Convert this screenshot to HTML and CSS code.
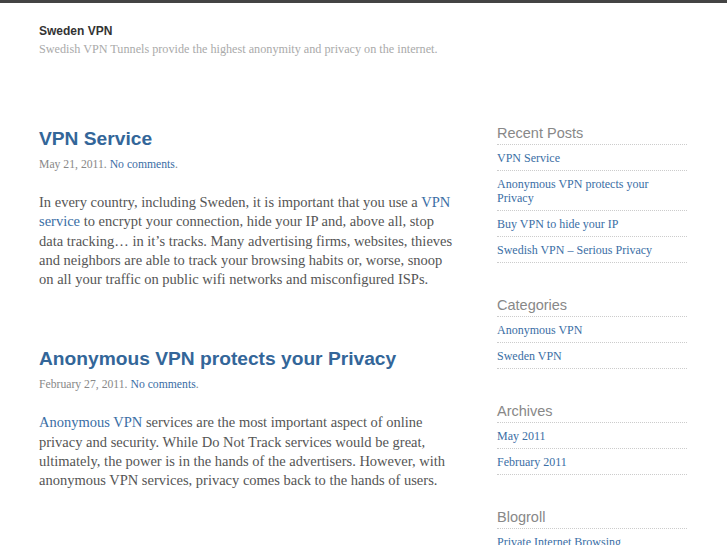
FILE: index.html
```html
<!DOCTYPE html>
<html>
<head>
<meta charset="utf-8">
<link rel="stylesheet" href="styles.css">
</head>
<body>
<div class="topbar"></div>
<div class="page">
  <header class="site-header">
    <div class="site-title">Sweden VPN</div>
    <div class="site-desc">Swedish VPN Tunnels provide the highest anonymity and privacy on the internet.</div>
  </header>
  <div class="layout">
    <main class="content">
      <article class="post">
        <h2 class="post-title">VPN Service</h2>
        <div class="post-meta">May 21, 2011. <a href="#">No comments</a>.</div>
        <p class="post-body">In every country, including Sweden, it is important that you use a <a href="#">VPN service</a> to encrypt your connection, hide your IP and, above all, stop data tracking… in it’s tracks. Many advertising firms, websites, thieves and neighbors are able to track your browsing habits or, worse, snoop on all your traffic on public wifi networks and misconfigured ISPs.</p>
      </article>
      <article class="post">
        <h2 class="post-title">Anonymous VPN protects your Privacy</h2>
        <div class="post-meta">February 27, 2011. <a href="#">No comments</a>.</div>
        <p class="post-body"><a href="#">Anonymous VPN</a> services are the most important aspect of online privacy and security. While Do Not Track services would be great, ultimately, the power is in the hands of the advertisers. However, with anonymous VPN services, privacy comes back to the hands of users.</p>
      </article>
    </main>
    <aside class="sidebar">
      <section class="widget">
        <h3 class="widget-title">Recent Posts</h3>
        <ul class="widget-list">
          <li><a href="#">VPN Service</a></li>
          <li><a href="#">Anonymous VPN protects your Privacy</a></li>
          <li><a href="#">Buy VPN to hide your IP</a></li>
          <li><a href="#">Swedish VPN – Serious Privacy</a></li>
        </ul>
      </section>
      <section class="widget">
        <h3 class="widget-title">Categories</h3>
        <ul class="widget-list">
          <li><a href="#">Anonymous VPN</a></li>
          <li><a href="#">Sweden VPN</a></li>
        </ul>
      </section>
      <section class="widget">
        <h3 class="widget-title">Archives</h3>
        <ul class="widget-list">
          <li><a href="#">May 2011</a></li>
          <li><a href="#">February 2011</a></li>
        </ul>
      </section>
      <section class="widget">
        <h3 class="widget-title">Blogroll</h3>
        <ul class="widget-list">
          <li><a href="#">Private Internet Browsing</a></li>
        </ul>
      </section>
    </aside>
  </div>
</div>
</body>
</html>
```
FILE: styles.css
```css
html, body {
  margin: 0;
  padding: 0;
  background: #ffffff;
}
body {
  font-family: "Liberation Serif", "Times New Roman", serif;
  color: #555555;
  overflow: hidden;
}
a {
  color: #3a6ea5;
  text-decoration: none;
}
.topbar {
  height: 3px;
  background: #444444;
}
.page {
  padding-left: 39px;
}
.site-header {
  padding-top: 21px;
  height: 103px;
}
.site-title {
  font-family: "Liberation Sans", Arial, sans-serif;
  font-weight: bold;
  font-size: 12px;
  line-height: 14px;
  color: #333333;
}
.site-desc {
  margin-top: 4px;
  font-size: 12.2px;
  line-height: 14px;
  color: #aaaaaa;
}
.layout {
  display: flex;
  align-items: flex-start;
}
.content {
  width: 416px;
  flex: none;
}
.post {
  margin-bottom: 58px;
}
.post-title {
  margin: 0;
  font-family: "Liberation Sans", Arial, sans-serif;
  font-weight: bold;
  font-size: 19.2px;
  line-height: 24px;
  color: #336699;
}
.post-meta {
  margin-top: 7px;
  font-size: 11.7px;
  line-height: 14px;
  color: #888888;
}
.post-body {
  margin: 21px 0 0;
  font-size: 14.5px;
  line-height: 19.25px;
  color: #555555;
}
.sidebar {
  margin-left: 42px;
  width: 190px;
  flex: none;
  margin-top: -3px;
}
.widget {
  margin-bottom: 33px;
}
.widget-title {
  margin: 0;
  font-family: "Liberation Sans", Arial, sans-serif;
  font-weight: normal;
  font-size: 14.5px;
  line-height: 18px;
  color: #888888;
  padding-bottom: 2px;
  border-bottom: 1px dotted #cccccc;
}
.widget-list {
  list-style: none;
  margin: 0;
  padding: 0;
}
.widget-list li {
  font-size: 12px;
  line-height: 14px;
  padding: 6px 8px 5px 0;
  border-bottom: 1px dotted #cccccc;
}
```
